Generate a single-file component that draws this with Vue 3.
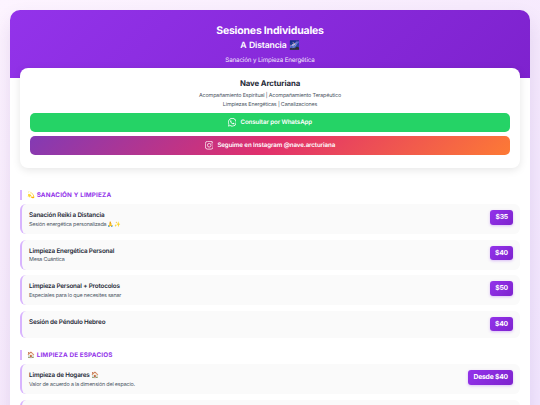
<script setup>
const sections = [
  {
    title: '💫 SANACIÓN Y LIMPIEZA',
    items: [
      { name: 'Sanación Reiki a Distancia', detail: 'Sesión energética personalizada 🙏✨', price: '$35' },
      { name: 'Limpieza Energética Personal', detail: 'Mesa Cuántica', price: '$40' },
      { name: 'Limpieza Personal + Protocolos', detail: 'Especiales para lo que necesites sanar', price: '$50' },
      { name: 'Sesión de Péndulo Hebreo', detail: '', price: '$40' },
    ],
  },
  {
    title: '🏠 LIMPIEZA DE ESPACIOS',
    items: [
      { name: 'Limpieza de Hogares 🏠', detail: 'Valor de acuerdo a la dimensión del espacio.', price: 'Desde $40' },
      { name: '', detail: '', price: '' },
    ],
  },
]
</script>

<template>
  <div class="page">
    <div class="container">
      <header class="header">
        <h1>Sesiones Individuales</h1>
        <h2>A Distancia 🌌</h2>
        <p>Sanación y Limpieza Energética</p>
      </header>

      <section class="profile">
        <h3>Nave Arcturiana</h3>
        <p>Acompañamiento Espiritual | Acompañamiento Terapéutico</p>
        <p>Limpiezas Energéticas | Canalizaciones</p>
        <a class="btn whatsapp">
          <svg viewBox="0 0 24 24" fill="currentColor">
            <path
              d="M17.472 14.382c-.297-.149-1.758-.867-2.03-.967-.273-.099-.471-.148-.67.15-.197.297-.767.966-.94 1.164-.173.199-.347.223-.644.075-.297-.15-1.255-.463-2.39-1.475-.883-.788-1.48-1.761-1.653-2.059-.173-.297-.018-.458.13-.606.134-.133.298-.347.446-.52.149-.174.198-.298.298-.497.099-.198.05-.371-.025-.52-.075-.149-.669-1.612-.916-2.207-.242-.579-.487-.5-.669-.51-.173-.008-.371-.01-.57-.01-.198 0-.52.074-.792.372-.272.297-1.04 1.016-1.04 2.479 0 1.462 1.065 2.875 1.213 3.074.149.198 2.096 3.2 5.077 4.487.709.306 1.262.489 1.694.625.712.227 1.36.195 1.871.118.571-.085 1.758-.719 2.006-1.413.248-.694.248-1.289.173-1.413-.074-.124-.272-.198-.57-.347m-5.421 7.403h-.004a9.87 9.87 0 01-5.031-1.378l-.361-.214-3.741.982.998-3.648-.235-.374a9.86 9.86 0 01-1.51-5.26c.001-5.45 4.436-9.884 9.888-9.884 2.64 0 5.122 1.03 6.988 2.898a9.825 9.825 0 012.893 6.994c-.003 5.45-4.437 9.884-9.885 9.884m8.413-18.297A11.815 11.815 0 0012.05 0C5.495 0 .16 5.335.157 11.892c0 2.096.547 4.142 1.588 5.945L.057 24l6.305-1.654a11.882 11.882 0 005.683 1.448h.005c6.554 0 11.89-5.335 11.893-11.893a11.821 11.821 0 00-3.48-8.413z"
            />
          </svg>
          <span>Consultar por WhatsApp</span>
        </a>
        <a class="btn instagram">
          <svg viewBox="0 0 24 24" fill="none" stroke="currentColor" stroke-width="2.1">
            <rect x="1.1" y="1.1" width="21.8" height="21.8" rx="6" />
            <circle cx="12" cy="12" r="5.1" />
            <circle cx="18.4" cy="5.6" r="1.4" fill="currentColor" stroke="none" />
          </svg>
          <span>Seguime en Instagram @nave.arcturiana</span>
        </a>
      </section>

      <main class="services">
        <section v-for="section in sections" :key="section.title" class="group">
          <h4>{{ section.title }}</h4>
          <div v-for="item in section.items" :key="item.name" class="item" :class="{ short: !item.detail }">
            <div class="info">
              <div class="name">{{ item.name }}</div>
              <div class="detail">{{ item.detail }}</div>
            </div>
            <div v-if="item.price" class="price">{{ item.price }}</div>
          </div>
        </section>
      </main>
    </div>
  </div>
</template>

<style>
body {
  overflow: hidden;
}
</style>

<style scoped>
* {
  box-sizing: border-box;
  margin: 0;
}

.page {
  height: 405px;
  padding: 10px;
  overflow: hidden;
  background: linear-gradient(135deg, #fdf4ff 0%, #f7ebfd 50%, #f3e8ff 100%);
  font-family: Inter, 'Noto Color Emoji', sans-serif;
  text-rendering: geometricPrecision;
}

.container {
  height: 500px;
  overflow: hidden;
  border-radius: 10px;
  background: #fff;
  box-shadow: 0 10px 20px rgba(80, 30, 130, 0.13);
}

.header {
  height: 67.5px;
  padding-top: 13px;
  background: linear-gradient(135deg, #9333ea 0%, #7e22ce 100%);
  color: #fff;
  text-align: center;
}

.header h1 {
  font-size: 10.5px;
  line-height: 16px;
  font-weight: 700;
  letter-spacing: -0.2px;
}

.header h2 {
  margin-top: 1px;
  font-size: 8.7px;
  line-height: 13px;
  font-weight: 600;
  letter-spacing: -0.16px;
  word-spacing: 0.6px;
}

.header p {
  margin-top: 2.5px;
  font-size: 6.2px;
  line-height: 10px;
  letter-spacing: -0.12px;
  opacity: 0.9;
}

.profile {
  position: relative;
  height: 100.5px;
  margin: -10px 10px 0;
  padding: 10px;
  border-radius: 8px;
  background: #fff;
  box-shadow: 0 2px 8px rgba(0, 0, 0, 0.1);
  text-align: center;
}

.profile h3 {
  margin-bottom: 3.5px;
  color: #1f2937;
  font-size: 7.8px;
  line-height: 11px;
  font-weight: 700;
  letter-spacing: -0.1px;
}

.profile p {
  color: #4b5563;
  font-size: 5.4px;
  line-height: 8.5px;
  letter-spacing: -0.165px;
}

.btn {
  display: flex;
  align-items: center;
  justify-content: center;
  gap: 4px;
  height: 19px;
  border-radius: 5px;
  color: #fff;
  font-size: 6.2px;
  font-weight: 600;
  letter-spacing: -0.1px;
}

.btn svg {
  width: 8.5px;
  height: 8.5px;
}

.btn span {
  padding-top: 0.6px;
}

.whatsapp {
  margin-top: 4px;
  background: #25d366;
}

.instagram {
  margin-top: 4px;
  background: linear-gradient(135deg, #833ab4, #e1306c, #fd7a35);
}

.services {
  padding: 22px 10px 0;
}

.group {
  margin-bottom: 12px;
}

.group h4 {
  margin-bottom: 4.5px;
  padding: 1px 0 0 5px;
  border-left: 2px solid #d8b4fe;
  color: #9333ea;
  font-size: 6.3px;
  line-height: 8.5px;
  font-weight: 700;
  letter-spacing: 0.17px;
}

.item {
  display: flex;
  justify-content: space-between;
  height: 30px;
  margin-bottom: 5.5px;
  padding: 6px 7px;
  border-left: 2px solid #d8b4fe;
  border-radius: 6px;
  background: #fafafa;
}

.item.short {
  height: 27.5px;
}

.info {
  padding-top: 1px;
}

.name {
  color: #1f2937;
  font-size: 6.3px;
  line-height: 9px;
  font-weight: 600;
  letter-spacing: -0.16px;
}

.detail {
  padding-top: 0.6px;
  color: #4b5563;
  font-size: 5.4px;
  line-height: 9.5px;
  letter-spacing: -0.18px;
}

.price {
  height: 14.5px;
  padding: 0 5px;
  border-radius: 3px;
  background: linear-gradient(135deg, #9333ea, #7e22ce);
  box-shadow: 0 1px 3px rgba(147, 51, 234, 0.3);
  color: #fff;
  font-size: 6.8px;
  line-height: 14.5px;
  font-weight: 700;
  letter-spacing: -0.2px;
}
</style>
